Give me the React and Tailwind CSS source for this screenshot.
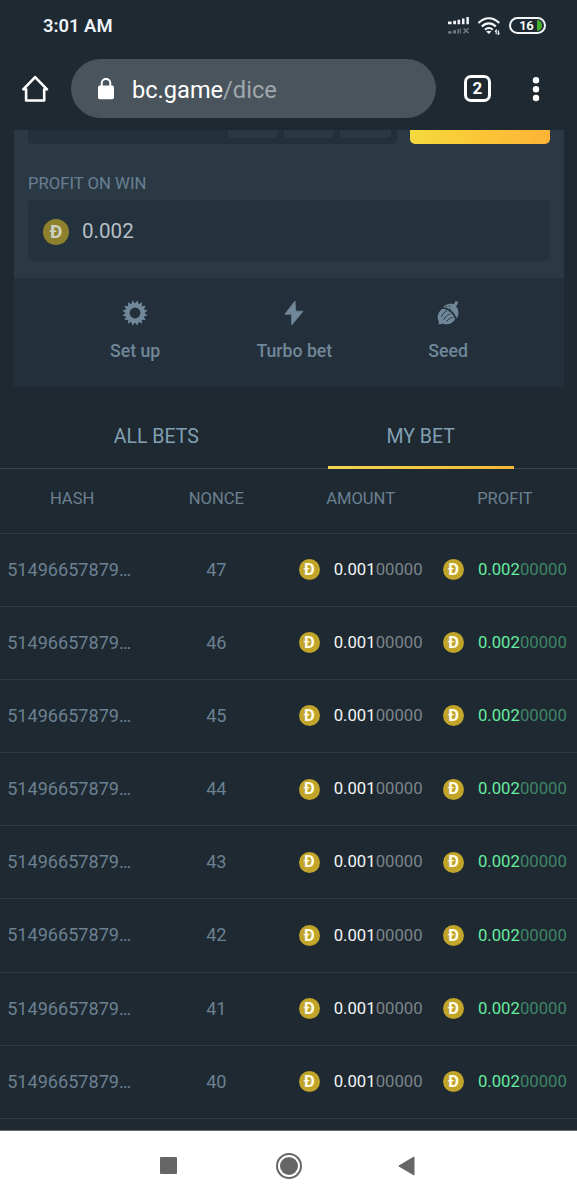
import React, { useState } from "react";

const bets = [47, 46, 45, 44, 43, 42, 41, 40];

const gearPoints = Array.from({ length: 64 }, (_, i) => {
  const step = i % 4;
  const outer = step === 1 || step === 2;
  const radius = outer ? 12.3 : 10;
  const nudge = outer ? (step === 1 ? 0.02 : -0.02) : 0;
  const angle = ((i - 1.5) * Math.PI * 2) / 64 + Math.PI / 16 + nudge;
  return `${(13 + radius * Math.sin(angle)).toFixed(2)} ${(13 - radius * Math.cos(angle)).toFixed(2)}`;
}).join("L");

const GearIcon = () => (
  <svg className="mr-px" width="26" height="26" viewBox="0 0 26 26" fill="currentColor">
    <path
      fillRule="evenodd"
      d={`M${gearPoints}ZM13 7.6a5.4 5.4 0 1 0 0 10.8a5.4 5.4 0 0 0 0-10.8Z`}
    />
  </svg>
);

const BoltIcon = () => (
  <svg width="26" height="26" viewBox="0 0 26 26" fill="currentColor" stroke="currentColor" strokeWidth=".8" strokeLinejoin="round">
    <path d="M14 1 3.8 14.2h6.8L10.7 25 22 11.2h-7.4L14 1Z" />
  </svg>
);

const AcornIcon = () => (
  <svg width="26" height="26" viewBox="0 0 26 26">
    <path
      fill="currentColor"
      d="M8.2 7.2C10.4 4.3 14.6 3 18.2 4.2c1.7-.8 2-1.9 2.1-3.2l2.9.8c-.3 2.1-1 3.4-2.3 4.4c3.1 3.4 3.5 8.1.8 12.3c-1.8-5.9-7.2-10.6-13.5-11.3Z"
    />
    <path
      fill="currentColor"
      d="M7.2 8.7c5.8.5 11.1 4.8 12.9 10.6c-1.6 3.2-4.9 5.2-8.4 4.9c-1.8 0-3.1-.3-4.4-.8c-1.2.6-2.5.9-3.7 1c.3-1.3.4-2.3 0-3.5C1.4 16.6 3.3 11.9 7.2 8.7Z"
    />
    <path
      d="M11.4 11.2c-2.2.8-4 3.1-4.8 5.3M15 14c-2.5.7-5 3.2-6.3 5.7M17.7 17.5c-2.2.2-4.4 1.7-6 3.8M10.8 6.7l1 .2M14 5.8l.9.4M14.5 8.7l.8.6"
      fill="none"
      stroke="#23303b"
      strokeWidth=".9"
      strokeLinecap="round"
    />
  </svg>
);

const SignalIcon = () => (
  <svg width="23" height="20" viewBox="0 0 23 20">
    <path
      d="M1 5.6h3.6v2.6H1zM6.2 4.8h2.8v3.4H6.2zM10.5 3.8h2.7v4.4h-2.7zM15 2.4h2.5v5.8H15zM19.4 1h2.5v7.2h-2.5z"
      fill="#eef2f5"
    />
    <path d="M1 15.2h3.6v2.2H1zM6.2 14.3h2.8v3.1H6.2zM10.5 13h1.8v4.4h-1.8zM13.2 12.3H14v5.1h-.8z" fill="#737c83" />
    <path d="m16.5 12.2 5 5m0-5-5 5" stroke="#737c83" strokeWidth="1.4" />
  </svg>
);

const WifiIcon = () => (
  <svg width="25" height="20" viewBox="0 0 25 20" fill="none" stroke="#f5f8fa">
    <path d="M1.5 7.1C7.6.6 16.1.6 22.2 7.1M4.9 10.6c4.1-4.2 9.8-4.2 13.9 0" strokeWidth="2.2" />
    <path d="M8 13.7c2.3-2.3 5.4-2.3 7.7 0" strokeWidth="2" />
    <path d="m9.2 15.6 2.6 2.3 2.5-2.3c-1.4-1.1-3.7-1.1-5.1 0Z" fill="#f5f8fa" stroke="none" />
    <path d="M19.2 18.3v-4l-1.2 1.4M21.3 14.3v4l1.2-1.4" strokeWidth="1.1" />
  </svg>
);

const HomeIcon = () => (
  <svg width="28" height="28" viewBox="0 0 28 28" fill="none" stroke="white" strokeWidth="2.6" strokeLinejoin="round" strokeLinecap="round">
    <path d="M2.3 14.3 14.1 2.2 26 14.3h-2.8v11.2H5.1V14.3Z" />
  </svg>
);

const LockIcon = () => (
  <svg width="18" height="22" viewBox="0 0 18 22">
    <rect x="1" y="7.4" width="16" height="13.8" rx="1.8" fill="white" />
    <path d="M4.7 8V5.2a4.3 4.3 0 0 1 8.6 0V8" fill="none" stroke="white" strokeWidth="2" />
  </svg>
);

// eslint-disable-next-line react/prop-types
const Coin = ({ large }) => (
  <span
    className={`flex shrink-0 items-center justify-center rounded-full font-bold ${
      large
        ? "mt-[2px] h-[26px] w-[26px] bg-[#8d812f] text-[19px] leading-[19px] text-[#d0d0c2]"
        : "h-[21px] w-[21px] bg-[#c1a42a] text-[16.5px] leading-[16px] text-[#fffbe8]"
    }`}
  >
    Ð
  </span>
);

const Amount = ({ value, zeros, profit }) => (
  <div className="flex items-center justify-center gap-[14px]">
    <Coin />
    <span className={`text-[16.7px] leading-5 ${profit ? "text-[#66eda0]" : "text-[#f4f6f7]"}`}>
      {value}
      <span className={profit ? "text-[#3f8566]" : "text-[#7c848a]"}>{zeros}</span>
    </span>
  </div>
);

const StatusBar = () => (
  <div className="flex h-[52px] items-center pr-[31px] pl-[43px]">
    <span className="text-[18.4px] leading-7 font-semibold text-[#edf3f7]">3:01 AM</span>
    <div className="ml-auto flex items-center pb-px">
      <SignalIcon />
      <span className="ml-[7px]">
        <WifiIcon />
      </span>
      <div className="ml-[7px] flex h-[17px] w-[37px] items-center justify-end overflow-hidden rounded-full border-2 border-[#f2f5f7] pr-[2px]">
        <span className="text-[13px] leading-[13px] font-semibold tracking-[-0.6px] text-white">16</span>
        <span className="ml-[4px] h-[11px] w-[5px] rounded-r-full bg-[#44ad2a]" />
      </div>
    </div>
  </div>
);

const BrowserBar = () => (
  <div className="flex h-[78px] items-start pt-[7px] pl-[21px]">
    <div className="flex h-[59px] items-center">
      <HomeIcon />
    </div>
    <div className="ml-[22px] flex h-[59px] w-[365px] items-center rounded-full bg-[#4a545c] pl-[26px]">
      <LockIcon />
      <span className="ml-[17px] pt-[4px] text-[23.6px] text-white">
        bc.game<span className="text-[#a1a8ad]">/dice</span>
      </span>
    </div>
    <div className="ml-[28px] flex h-[59px] items-center">
      <div className="flex h-[27px] w-[27px] items-center justify-center rounded-[7px] border-3 border-white pt-px text-[17px] font-bold text-white">
        2
      </div>
    </div>
    <svg className="ml-[41px] mt-[18px]" width="8" height="25" viewBox="0 0 8 25" fill="white">
      <circle cx="4" cy="3.3" r="3.2" />
      <circle cx="4" cy="12.2" r="3.2" />
      <circle cx="4" cy="21" r="3.2" />
    </svg>
  </div>
);

const BetPanel = () => (
  <div className="mx-[14px] w-[550px]">
    <div className="h-[148px] bg-[#2b3945] px-[14px]">
      <div className="flex h-[14px]">
        <div className="flex w-[369px] justify-end gap-[6px] rounded-b-[5px] bg-[#22303c] pr-[6px]">
          <span className="h-2 w-[50px] rounded-b-[4px] bg-[#2a3844]" />
          <span className="h-2 w-[50px] rounded-b-[4px] bg-[#2a3844]" />
          <span className="h-2 w-[51px] rounded-b-[4px] bg-[#2a3844]" />
        </div>
        <div className="ml-[13px] w-[140px] rounded-b-[5px] bg-linear-to-r from-[#f4d93d] via-[#fbc638] to-[#fdb336]" />
      </div>
      <div className="mt-[30px] text-[16.7px] leading-5 text-[#698093]">PROFIT ON WIN</div>
      <div className="mt-[6px] flex h-[61px] items-center rounded-[5px] bg-[#24323d] pl-[15px]">
        <Coin large />
        <span className="ml-[13px] text-[20.6px] leading-6 text-[#b6bfc6]">0.002</span>
      </div>
    </div>
    <div className="flex h-[109px] justify-evenly bg-[#23303b] pt-[22px] text-[17.7px] font-medium text-[#6f8798]">
      <div className="flex flex-col items-center">
        <GearIcon />
        <span className="mt-[13px] leading-6">Set up</span>
      </div>
      <div className="flex flex-col items-center">
        <BoltIcon />
        <span className="mt-[13px] leading-6">Turbo bet</span>
      </div>
      <div className="flex flex-col items-center">
        <AcornIcon />
        <span className="mt-[13px] leading-6">Seed</span>
      </div>
    </div>
  </div>
);

const BetTabs = () => {
  const [tab, setTab] = useState("MY BET");

  return (
    <div className="flex h-[82px] border-b border-[#35434f] px-6">
      {["ALL BETS", "MY BET"].map((name) => (
        <button
          key={name}
          type="button"
          onClick={() => setTab(name)}
          className="flex h-[82px] flex-1 flex-col items-center text-[19.5px] text-[#83a0b3]"
        >
          <span className="mt-[38px] leading-6">{name}</span>
          {tab === name && (
            <span className="mt-auto h-[3px] w-[186px] bg-linear-to-r from-[#f1d64f] to-[#f5b83a]" />
          )}
        </button>
      ))}
    </div>
  );
};

const BetTable = () => (
  <div className="text-center text-[#6b8090]">
    <div className="grid h-[64.5px] grid-cols-4 items-center border-b border-[#2e3b45] pb-[3px] text-[16.6px]">
      <span>HASH</span>
      <span>NONCE</span>
      <span>AMOUNT</span>
      <span>PROFIT</span>
    </div>
    {bets.map((nonce) => (
      <div key={nonce} className="grid h-[73.2px] grid-cols-4 items-center border-b border-[#2e3b45] text-[18.1px]">
        <span className="pr-[6px] pb-px">51496657879…</span>
        <span className="pb-px">{nonce}</span>
        <Amount value="0.001" zeros="00000" />
        <Amount value="0.002" zeros="00000" profit />
      </div>
    ))}
  </div>
);

const NavBar = () => (
  <div className="flex h-[70px] shrink-0 items-center border-t border-[#62676a] bg-white pl-[160px]">
    <span className="h-[17px] w-[17px] rounded-[1px] bg-[#666]" />
    <span className="ml-[99px] flex h-[26px] w-[26px] items-center justify-center rounded-full border-2 border-[#666]">
      <span className="h-[18px] w-[18px] rounded-full bg-[#666]" />
    </span>
    <svg className="ml-[96px]" width="17" height="20" viewBox="0 0 17 20">
      <path d="M.8 10 16 1v18Z" fill="#666" stroke="#666" strokeLinejoin="round" />
    </svg>
  </div>
);

export default function App() {
  return (
    <div className="flex h-[1200px] w-[577px] flex-col overflow-hidden bg-[#1e2932] font-['Roboto',sans-serif]">
      <StatusBar />
      <BrowserBar />
      <div className="h-[1000px] overflow-hidden">
        <BetPanel />
        <BetTabs />
        <BetTable />
      </div>
      <NavBar />
    </div>
  );
}
